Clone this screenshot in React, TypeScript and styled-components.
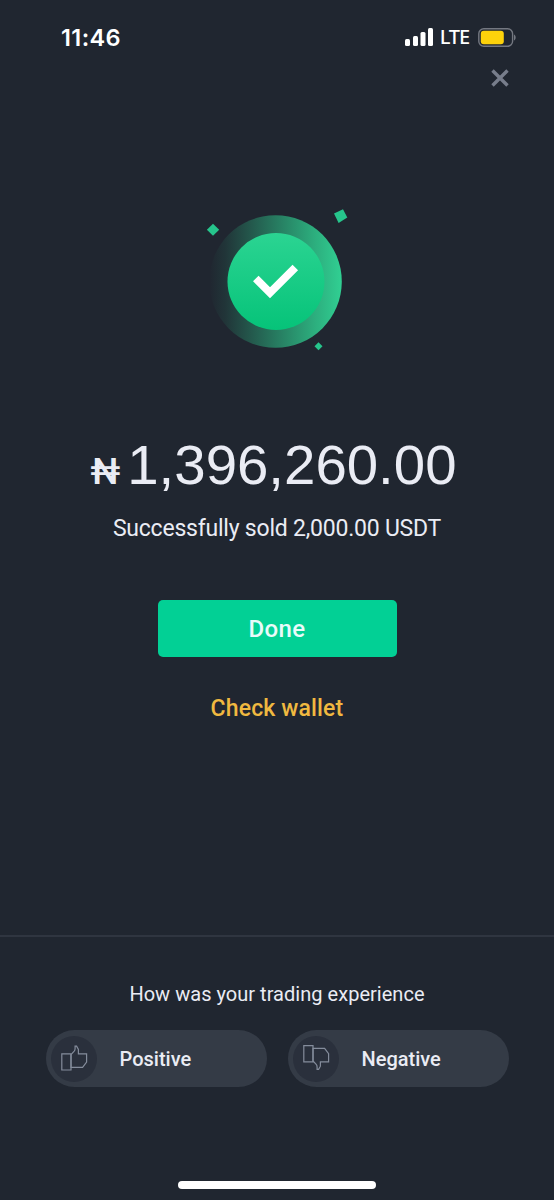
import React from 'react';
import styled, { createGlobalStyle } from 'styled-components';

const GlobalStyle = createGlobalStyle`
  *, *::before, *::after { box-sizing: border-box; }
  body { margin: 0; background: #202630; }
  button { border: 0; padding: 0; background: none; color: inherit; font: inherit; cursor: pointer; }
  svg { display: block; flex: none; }
`;

const Screen = styled.main`
  display: flex;
  flex-direction: column;
  width: 554px;
  height: 1200px;
  overflow: hidden;
  background: #202630;
  color: #eaecf4;
  font-family: Roboto, 'Noto Sans', sans-serif;
  white-space: nowrap;
`;

const StatusBar = styled.header`
  display: flex;
  align-items: center;
  justify-content: space-between;
  height: 60px;
  padding: 14px 38px 0 61px;
  color: #fff;
`;

const Clock = styled.time`
  padding-top: 2px;
  font: 600 23.5px/30px Inter, sans-serif;
  letter-spacing: 0.4px;
`;

const Indicators = styled.div`
  display: flex;
  align-items: center;
`;

const Network = styled.span`
  margin: 0 9px 0 6px;
  font: 500 20px/28px 'Noto Sans', sans-serif;
  letter-spacing: -1.1px;
`;

const TopBar = styled.div`
  display: flex;
  justify-content: flex-end;
  height: 40px;
  padding: 9px 45px 0 0;
`;

const CloseButton = styled.button`
  width: 18px;
  height: 18px;
`;

const Result = styled.section`
  display: flex;
  flex-direction: column;
  align-items: center;
  height: 835px;
  padding-top: 95px;
`;

const MarkFrame = styled.div`
  padding-left: 6px;
`;

const Amount = styled.h1`
  display: flex;
  align-items: baseline;
  margin: 67px 0 0 -7px;
  font: 400 56.4px/66px 'Liberation Sans', Arial, sans-serif;
`;

const Currency = styled.span`
  margin-right: 7px;
  font: 500 37px/1 Roboto, sans-serif;
`;

const Summary = styled.p<{ $size: number; $spacing: number }>`
  margin: 0;
  font-size: ${({ $size }) => $size}px;
  line-height: 32px;
  letter-spacing: ${({ $spacing }) => $spacing}px;
`;

const Details = styled.div`
  margin-top: 15px;
`;

const DoneButton = styled.button`
  width: 239px;
  height: 57px;
  margin-top: 55px;
  border-radius: 5px;
  background: #02d095;
  color: #e9fbfa;
  font-size: 24px;
  font-weight: 500;
  letter-spacing: 0.4px;
`;

const WalletLink = styled.button`
  margin-top: 36px;
  color: #f0b940;
  font-size: 23px;
  font-weight: 500;
  line-height: 32px;
  letter-spacing: 0.15px;
`;

const Feedback = styled.footer`
  display: flex;
  flex: 1;
  flex-direction: column;
  align-items: center;
  padding-top: 41px;
  border-top: 2px solid #2f3540;
`;

const Choices = styled.div`
  display: flex;
  gap: 21px;
  margin-top: 20px;
`;

const Choice = styled.button`
  display: flex;
  align-items: center;
  gap: 23px;
  width: 221px;
  height: 57px;
  padding-left: 5px;
  border-radius: 29px;
  background: #343b46;
  font-size: 20px;
  font-weight: 500;
`;

const IconDisc = styled.span`
  display: flex;
  align-items: center;
  justify-content: center;
  width: 46px;
  height: 46px;
  border-radius: 50%;
  background: #2a303c;
`;

const HomeIndicator = styled.div`
  width: 198px;
  height: 8px;
  margin: auto 0 11px;
  border-radius: 4px;
  background: #fff;
`;

const SignalIcon = () => (
  <svg width="29" height="18" viewBox="0 0 29 18" fill="#fff">
    <rect x="0" y="11" width="5" height="7" rx="1.5" />
    <rect x="8" y="8" width="5" height="10" rx="1.5" />
    <rect x="15.5" y="4" width="5" height="14" rx="1.5" />
    <rect x="23" y="0" width="5" height="18" rx="1.5" />
  </svg>
);

const BatteryIcon = () => (
  <svg width="38" height="19" viewBox="0 0 38 19">
    <rect x=".8" y=".8" width="33.8" height="17.4" rx="5" fill="none" stroke="#747881" strokeWidth="1.4" />
    <rect x="2.8" y="2.8" width="23" height="13.4" rx="3" fill="#fdd20b" />
    <path d="M36 6.5c2.2.8 2.2 5.2 0 6z" fill="#747881" />
  </svg>
);

const SuccessMark = () => (
  <svg width="180" height="170" viewBox="0 0 180 170">
    <defs>
      <linearGradient id="halo" x1="0" y1="0" x2="1" y2="0">
        <stop offset="0" stopColor="#2bcb8c" stopOpacity="0" />
        <stop offset=".12" stopColor="#2bcb8c" stopOpacity=".09" />
        <stop offset=".8" stopColor="#2fc98d" stopOpacity=".84" />
        <stop offset="1" stopColor="#31d093" />
      </linearGradient>
      <linearGradient id="disc" x1="0" y1="0" x2="0" y2="1">
        <stop offset="0" stopColor="#2bd492" />
        <stop offset="1" stopColor="#06c379" />
      </linearGradient>
    </defs>
    <circle cx="85.5" cy="86.5" r="66.3" fill="url(#halo)" />
    <circle cx="86" cy="86.5" r="48.5" fill="url(#disc)" />
    <path d="M65.8 83.5 80 97.8 105.3 72.5" fill="none" stroke="#fff" strokeWidth="7.8" />
    <g fill="#26c58c">
      <path d="m23 28.7 6.2 6-6.2 6.1-6.1-6.1z" />
      <path d="M144 18.4 153 14.2 157.3 22.6 148.6 28z" />
      <path d="m128.5 147.2 4 4-4 4.1-4-4.1z" />
    </g>
  </svg>
);

const ThumbIcon = ({ down = false }: { down?: boolean }) => (
  <svg width="28" height="28" viewBox="0 0 28 28" fill="none" stroke="#848c9b" strokeWidth="1.2">
    <g transform={down ? 'matrix(1 0 0 -1 0 25.6)' : undefined}>
      <path d="M1.8 8.8h9.2v16.2H1.8z" />
      <path d="M11 9.6 14.2 6.2q.9-1 .9-2.6V1.2h1.5l1.8 3.2v4.4h8.2v8.2l-4 5.3H11z" />
    </g>
  </svg>
);

export default function App() {
  return (
    <>
      <GlobalStyle />
      <Screen>
        <StatusBar>
          <Clock>11:46</Clock>
          <Indicators>
            <SignalIcon />
            <Network>LTE</Network>
            <BatteryIcon />
          </Indicators>
        </StatusBar>
        <TopBar>
          <CloseButton aria-label="Close">
            <svg width="18" height="18" viewBox="0 0 18 18" stroke="#777d8b" strokeWidth="3.4">
              <path d="m1.5 1.5 15 15m0-15-15 15" />
            </svg>
          </CloseButton>
        </TopBar>
        <Result>
          <MarkFrame><SuccessMark /></MarkFrame>
          <Amount>
            <Currency>₦</Currency>1,396,260.00
          </Amount>
          <Details>
            <Summary $size={23} $spacing={-0.22}>Successfully sold 2,000.00 USDT</Summary>
          </Details>
          <DoneButton>Done</DoneButton>
          <WalletLink>Check wallet</WalletLink>
        </Result>
        <Feedback>
          <Summary $size={20} $spacing={0.03}>How was your trading experience</Summary>
          <Choices>
            <Choice>
              <IconDisc><ThumbIcon /></IconDisc>
              Positive
            </Choice>
            <Choice>
              <IconDisc><ThumbIcon down /></IconDisc>
              Negative
            </Choice>
          </Choices>
          <HomeIndicator />
        </Feedback>
      </Screen>
    </>
  );
}
